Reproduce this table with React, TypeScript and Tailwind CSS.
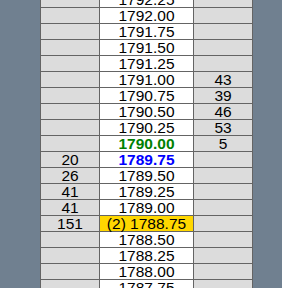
type Row = { bid?: string; price: string; ask?: string; kind?: "last" | "bid" | "mark" };

const rows: Row[] = [
  { price: "1792.25" },
  { price: "1792.00" },
  { price: "1791.75" },
  { price: "1791.50" },
  { price: "1791.25" },
  { price: "1791.00", ask: "43" },
  { price: "1790.75", ask: "39" },
  { price: "1790.50", ask: "46" },
  { price: "1790.25", ask: "53" },
  { price: "1790.00", ask: "5", kind: "last" },
  { bid: "20", price: "1789.75", kind: "bid" },
  { bid: "26", price: "1789.50" },
  { bid: "41", price: "1789.25" },
  { bid: "41", price: "1789.00" },
  { bid: "151", price: "(2) 1788.75", kind: "mark" },
  { price: "1788.50" },
  { price: "1788.25" },
  { price: "1788.00" },
  { price: "1787.75" },
];

function priceClass(kind?: Row["kind"]) {
  if (kind === "last") return "bg-white text-[#008000] font-bold";
  if (kind === "bid") return "bg-white text-[#0000ff] font-bold";
  if (kind === "mark") return "bg-[#ffd700] text-black";
  return "bg-white text-black";
}

export default function App() {
  return (
    <div
      className="flex h-[288px] w-[282px] overflow-hidden bg-[#708090] text-[15.5px] leading-[15px]"
      style={{ fontFamily: '"Liberation Sans", Arial, sans-serif' }}
    >
      <div className="w-[40px] shrink-0" />
      <div className="mt-[-8px] flex shrink-0 flex-col border-l border-[#646464]">
        {rows.map((r) => (
          <div key={r.price} className="flex h-[16px] border-b border-[#646464]">
            <div className="flex w-[59px] items-center justify-center border-r border-[#646464] bg-[#dcdcdc] text-black">
              {r.bid}
            </div>
            <div
              className={`flex w-[94px] items-center justify-center border-r border-[#646464] ${priceClass(r.kind)}`}
            >
              {r.price}
            </div>
            <div className="flex w-[59px] items-center justify-center border-r border-[#646464] bg-[#dcdcdc] text-black">
              {r.ask}
            </div>
          </div>
        ))}
      </div>
    </div>
  );
}
